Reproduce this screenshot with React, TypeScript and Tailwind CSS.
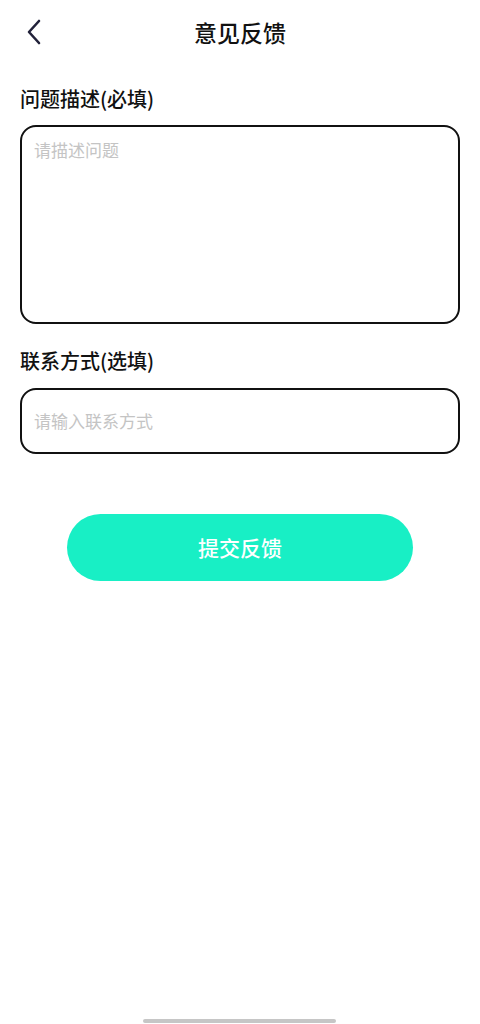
import React from "react";

export default function App() {
  const font = { fontFamily: '"Noto Sans CJK SC", "Noto Sans", sans-serif' };
  return (
    <div className="w-[480px] h-[1024px] bg-white flex flex-col relative" style={font}>
      <div className="h-[64px] flex items-center relative">
        <div className="absolute left-[22px] top-[18px] w-[24px] h-[28px] flex items-center justify-center">
          <svg width="16" height="26" viewBox="0 0 16 26" fill="none">
            <path d="M13 2 L3 13 L13 24" stroke="#22223a" strokeWidth="2.6" strokeLinecap="round" strokeLinejoin="round" />
          </svg>
        </div>
        <div className="flex-1 text-center text-[23px] font-medium text-[#111] leading-none">意见反馈</div>
      </div>
      <div className="px-[20px] flex flex-col">
        <div className="mt-[23px] text-[20px] font-medium text-[#111] leading-[24px]">问题描述(必填)</div>
        <div className="mt-[14px] h-[199px] border-[2.5px] border-[#111] rounded-[16px] px-[12px] pt-[12px]">
          <div className="text-[17px] text-[#c4c4c4] leading-[22px]">请描述问题</div>
        </div>
        <div className="mt-[25px] text-[20px] font-medium text-[#111] leading-[24px]">联系方式(选填)</div>
        <div className="mt-[15px] h-[66px] border-[2.5px] border-[#111] rounded-[16px] px-[12px] flex items-center">
          <div className="text-[17px] text-[#c4c4c4] leading-[22px]">请输入联系方式</div>
        </div>
      </div>
      <div className="mt-[60px] flex justify-center">
        <div className="w-[346px] h-[67px] rounded-full bg-[#18efc5] flex items-center justify-center text-white text-[21px] font-medium">
          提交反馈
        </div>
      </div>
      <div className="absolute left-[143px] bottom-[1px] w-[193px] h-[4px] rounded-full bg-[#c6c6c6]" />
    </div>
  );
}
